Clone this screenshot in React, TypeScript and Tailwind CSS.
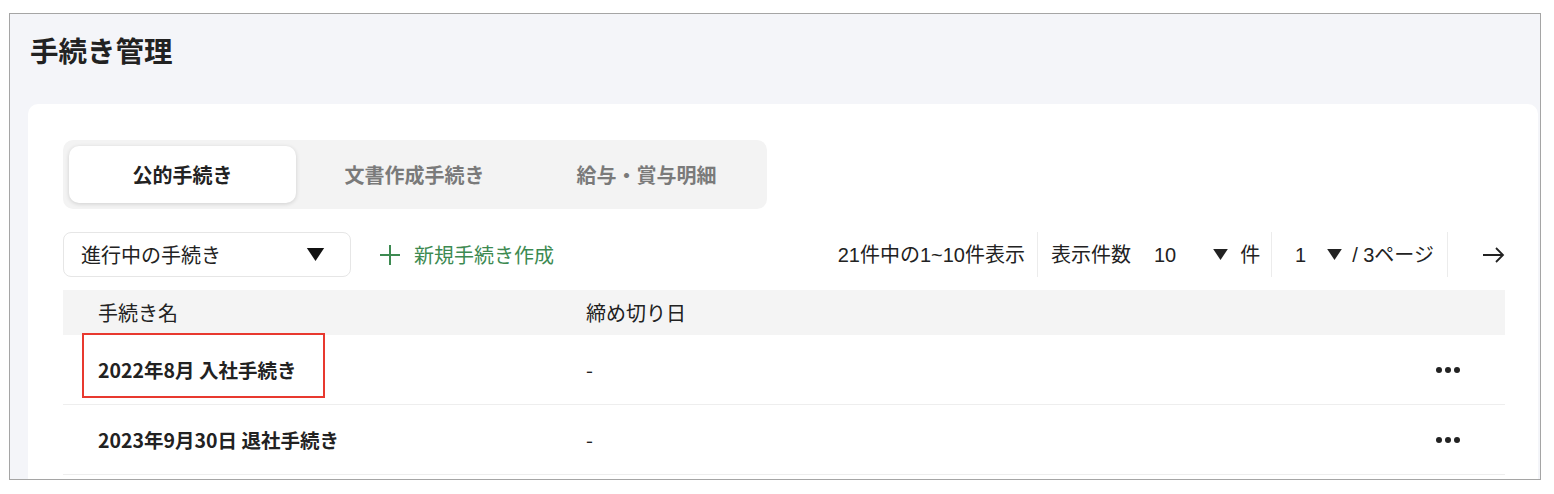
const font = { fontFamily: '"Noto Sans CJK JP", "Noto Sans", sans-serif' };

type Procedure = {
  name: string;
  deadline: string;
  highlighted?: boolean;
};

const procedures: Procedure[] = [
  { name: '2022年8月 入社手続き', deadline: '-', highlighted: true },
  { name: '2023年9月30日 退社手続き', deadline: '-' },
];

const tabs = ['公的手続き', '文書作成手続き', '給与・賞与明細'];

function Caret({ className }: { className?: string }) {
  return (
    <svg viewBox="0 0 16 12" className={className} fill="currentColor">
      <path d="M0 0h16L8 12z" />
    </svg>
  );
}

function PlusIcon() {
  return (
    <svg viewBox="0 0 20 20" className="h-[20px] w-[20px]" fill="none" stroke="currentColor" strokeWidth={2}>
      <path d="M10 0v20M0 10h20" />
    </svg>
  );
}

function ArrowIcon() {
  return (
    <svg viewBox="0 0 22 18" className="h-[18px] w-[22px]" fill="none" stroke="#222" strokeWidth={1.8}>
      <path d="M0 9h20M13 2l7 7-7 7" />
    </svg>
  );
}

function Dots() {
  return (
    <div className="flex items-center gap-[3px]">
      <span className="h-[6px] w-[6px] rounded-full bg-[#222]" />
      <span className="h-[6px] w-[6px] rounded-full bg-[#222]" />
      <span className="h-[6px] w-[6px] rounded-full bg-[#222]" />
    </div>
  );
}

function Toolbar() {
  return (
    <div className="mt-[23px] flex h-[45px] items-center text-[20px] text-[#222]">
      <button
        type="button"
        className="flex h-[45px] w-[288px] items-center justify-between rounded-[8px] border border-[#e6e6e6] pl-[17px] pr-[24px]"
      >
        <span>進行中の手続き</span>
        <Caret className="h-[13px] w-[21px] text-[#111]" />
      </button>
      <button type="button" className="ml-[29px] flex items-center gap-[14px] text-[#3d8a51]">
        <PlusIcon />
        <span>新規手続き作成</span>
      </button>
      <div className="flex-1" />
      <div className="flex h-[45px] items-center" style={{ fontFamily: '"Liberation Sans", "Noto Sans CJK JP", sans-serif' }}>
        <span className="pr-[12px]">21件中の1~10件表示</span>
        <div className="flex h-[45px] w-[234px] items-center border-l border-[#ececec]">
          <span className="ml-[13px]">表示件数</span>
          <span className="ml-[23px]">10</span>
          <Caret className="ml-[36px] h-[11px] w-[17px] text-[#222]" />
          <span className="ml-[11px]">件</span>
        </div>
        <div className="flex h-[45px] w-[176px] items-center border-l border-[#ececec]">
          <span className="ml-[23px]">1</span>
          <Caret className="ml-[20px] h-[11px] w-[17px] text-[#222]" />
          <span className="ml-[9px]">/ 3ページ</span>
        </div>
        <div className="flex h-[45px] w-[58px] items-center justify-end border-l border-[#ececec]">
          <ArrowIcon />
        </div>
      </div>
    </div>
  );
}

function ProcedureTable() {
  return (
    <div className="mt-[13px] text-[20px] text-[#222]">
      <div className="flex h-[45px] items-center bg-[#f4f4f4]">
        <div className="w-[523px] pl-[35px]">手続き名</div>
        <div>締め切り日</div>
      </div>
      {procedures.map((p) => (
        <div key={p.name} className="relative flex h-[70px] items-center border-b border-[#eeeeee]">
          <div className="w-[523px] pl-[35px] text-[19.5px] font-bold">{p.name}</div>
          <div className="flex-1">{p.deadline}</div>
          <div className="pr-[45px]">
            <Dots />
          </div>
          {p.highlighted && (
            <div className="absolute left-[19px] top-[-2px] h-[65px] w-[243px] border-2 border-[#e8392f]" />
          )}
        </div>
      ))}
    </div>
  );
}

export default function App() {
  return (
    <div className="h-[494px] w-full bg-white pl-[9px] pt-[13px]" style={font}>
      <div className="flex h-[467px] w-[1532px] flex-col overflow-hidden border border-[#a5a5a5] bg-[#f4f5f9]">
        <h1 className="h-[90px] pl-[20px] pt-[15px] text-[28.5px] font-bold text-[#222]">手続き管理</h1>
        <div className="ml-[18px] mr-[2px] flex-1 rounded-t-[10px] bg-white pl-[35px] pr-[33px] pt-[36px]">
          <div className="flex w-[704px] gap-[5px] rounded-[10px] bg-[#f3f3f3] p-[6px]">
            {tabs.map((t, i) => (
              <button
                key={t}
                type="button"
                className={
                  i === 0
                    ? 'h-[57px] w-[227px] rounded-[10px] bg-white text-[20px] font-bold text-[#222] shadow-[0_1px_4px_rgba(0,0,0,0.15)]'
                    : 'h-[57px] w-[227px] rounded-[10px] text-[20px] font-bold text-[#7a7a7a]'
                }
              >
                {t}
              </button>
            ))}
          </div>
          <Toolbar />
          <ProcedureTable />
        </div>
      </div>
    </div>
  );
}
